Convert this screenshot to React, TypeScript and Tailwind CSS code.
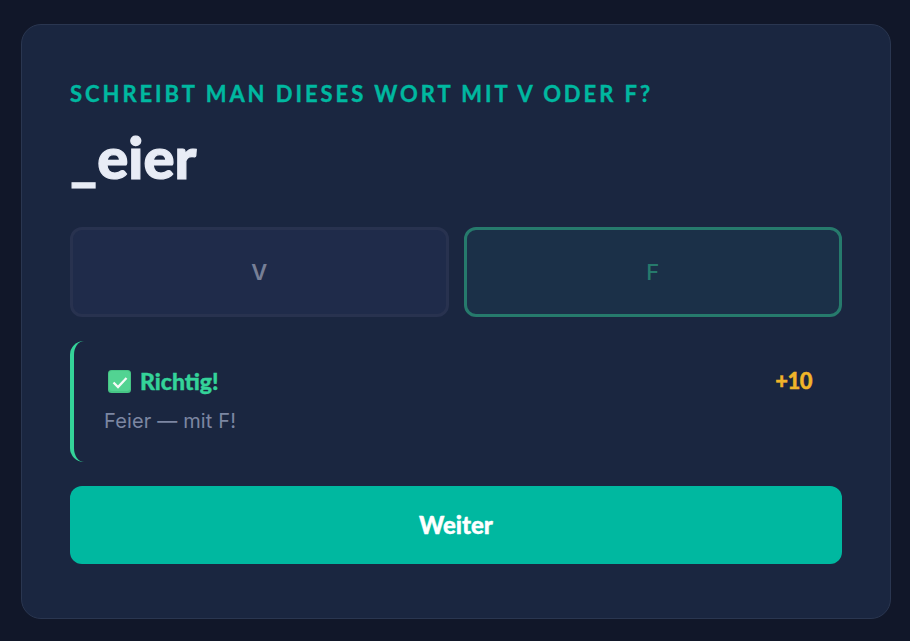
export default function App() {
  return (
    <div className="min-h-[641px] bg-[#111729] pt-[24px] pr-[19px] pl-[21px] font-['Lato',sans-serif]">
      <div className="h-[595px] rounded-[20px] border border-[#2a3650] bg-[#1a2640] px-[48px] pt-[56px]">
        <div className="text-[22px] leading-[25px] font-bold tracking-[2.95px] text-[#00b8a0] uppercase [-webkit-text-stroke:0.4px_#00b8a0]">
          Schreibt man dieses Wort mit V oder F?
        </div>
        <h1 className="mt-[19px] text-[58px] leading-[64px] font-black text-[#e8ecf6] [-webkit-text-stroke:1.2px_#e8ecf6]">
          _eier
        </h1>

        <div className="mt-[38px] grid grid-cols-2 gap-[15px]">
          <button className="h-[90px] rounded-[12px] border-[3px] border-[#28324f] bg-[#1f2b4a] font-['Inter',sans-serif] text-[22px] font-semibold text-[#777f96]">
            V
          </button>
          <button className="h-[90px] rounded-[12px] border-[3px] border-[#267a6c] bg-[#1b3048] font-['Inter',sans-serif] text-[22px] font-medium text-[#267a6c]">
            F
          </button>
        </div>

        <div className="mt-[24px] h-[121px] rounded-[14px] border-l-[4px] border-[#34d399] pt-[27px] pr-[30px] pl-[30px]">
          <div className="flex items-start justify-between">
            <div className="flex items-center gap-[9px] pl-[4px] text-[23px] leading-[27px] font-black text-[#34d399] [-webkit-text-stroke:0.4px_#34d399]">
              <svg width="23" height="23" viewBox="0 0 23 23" className="shrink-0">
                <rect width="23" height="23" rx="3.5" fill="#46c585" />
                <rect x="1" y="1" width="21" height="20" rx="3" fill="#52d392" />
                <path d="M5.5 12.5l4.5 4.5 8.5-9" fill="none" stroke="#f4fbf7" strokeWidth="2.3" />
              </svg>
              <span>Richtig!</span>
            </div>
            <span className="text-[22px] leading-[25px] font-black tracking-[-0.5px] text-[#f0b429] [-webkit-text-stroke:0.4px_#f0b429]">
              +10
            </span>
          </div>
          <p className="mt-[13px] font-['Inter',sans-serif] text-[20px] leading-[26px] tracking-[0.15px] text-[#7c86a2]">
            Feier — mit F!
          </p>
        </div>

        <button className="mt-[24px] h-[78px] w-full rounded-[12px] bg-[#00b8a0] text-[24px] font-black text-white [-webkit-text-stroke:0.4px_#ffffff]">
          Weiter
        </button>
      </div>
    </div>
  );
}
